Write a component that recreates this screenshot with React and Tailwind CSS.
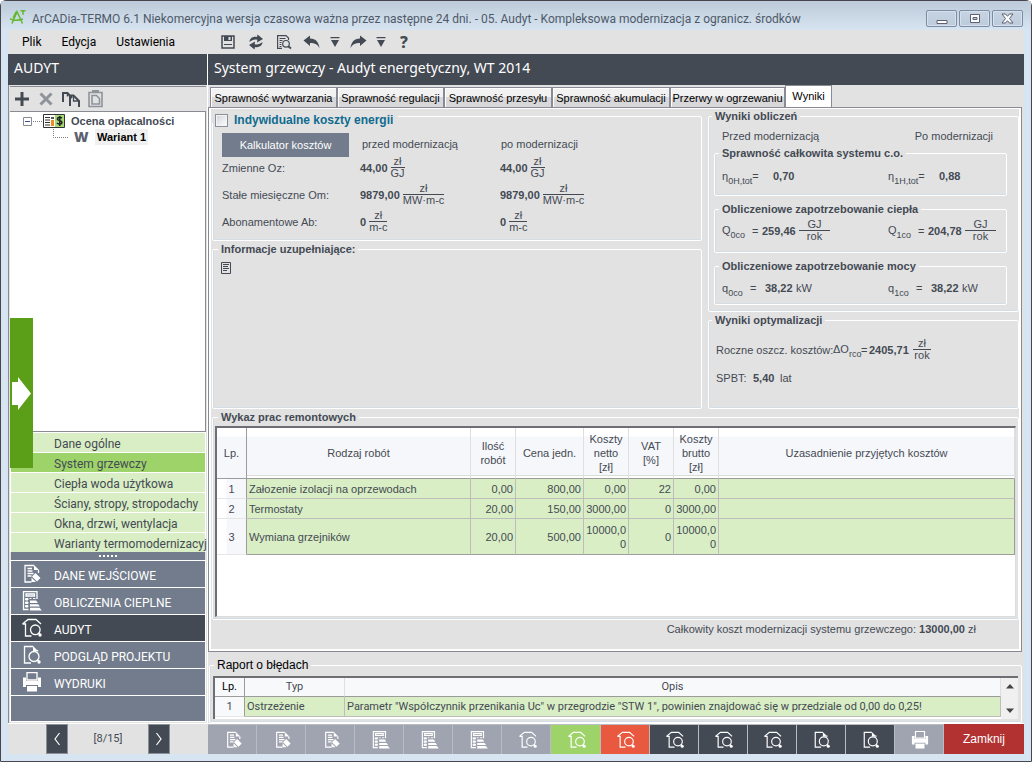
import React from "react";

const ui = "font-['Noto_Sans','Open_Sans',sans-serif]";
const compact = "font-['Roboto','Noto_Sans',sans-serif]";

function EditDoc({ size = 20 }) {
  return (
    <svg width={size} height={size} viewBox="0 0 20 20" fill="none" stroke="currentColor" strokeWidth="1.3" aria-hidden="true">
      <path d="M9.5 18H3V1.5h9M16.5 6v3" />
      <path d="M12 1l5 5h-5z" fill="currentColor" stroke="none" />
      <path d="M5.5 4.500h4.500M5.500 7h5M5.500 9.500h6M5.500 12h4" />
      <path d="M10 12.500l3.500-3.500 5 5-3.500 3.500zM9.500 13.500l4.500 4.500H9.500z" fill="currentColor" stroke="none" />
    </svg>
  );
}

function Calc({ size = 20 }) {
  return (
    <svg width={size} height={size} viewBox="0 0 20 20" fill="none" stroke="currentColor" strokeWidth="1.3" aria-hidden="true">
      <path d="M6.500 18.500H1.500V.7h13.500V8" />
      <path d="M4 3h8.500v2H4z" />
      <path d="M3.500 7.500h2.500v1.500H3.500zM7.500 7.500H9.500M11 7.500h2.500M3.500 11h2.500v1.500H3.500zM3.500 14.500h2.500V16H3.500z" fill="currentColor" strokeWidth="1" />
      <path d="M8 9.500h6l1.500 1.500v1H8zM8 13.300h8l1.500 1.500v.7H8zM8 16.800h9.500L19.500 19v.5H8z" fill="currentColor" stroke="none" />
    </svg>
  );
}

function HouseSearch({ size = 20 }) {
  return (
    <svg width={size} height={size} viewBox="0 0 20 20" fill="none" stroke="currentColor" strokeWidth="1.3" aria-hidden="true">
      <path d="M0.500 6L6 1.500h8L19 6M0.500 6h3v12h6" />
      <circle cx="13.300" cy="11.800" r="4.800" />
      <path d="M16.500 15l2 2" strokeWidth="1.600" />
      <circle cx="18" cy="17" r="1.700" fill="currentColor" stroke="none" />
    </svg>
  );
}

function DocSearch({ size = 20 }) {
  return (
    <svg width={size} height={size} viewBox="0 0 20 20" fill="none" stroke="currentColor" strokeWidth="1.3" aria-hidden="true">
      <path d="M9 18H2.500V1.500H11M15.500 5v1.500" />
      <path d="M11 1l5 5h-5z" fill="currentColor" stroke="none" />
      <circle cx="12" cy="11.500" r="5" />
      <path d="M15.500 15l2 2" strokeWidth="1.600" />
      <circle cx="17" cy="17" r="1.700" fill="currentColor" stroke="none" />
    </svg>
  );
}

function Printer({ size = 20 }) {
  return (
    <svg width={size} height={size} viewBox="0 0 20 20" fill="currentColor" aria-hidden="true">
      <path d="M5 0.500h10V8H5z" fill="none" stroke="currentColor" strokeWidth="1.300" />
      <path d="M1 5.500h3V9h12V5.500h3V15h-3v-2H4v2H1z" />
      <path d="M5 14h10v5.500H5z" />
    </svg>
  );
}

function Logo() {
  return (
    <svg width="16" height="18" viewBox="0 0 16 18" fill="none" stroke="#62b82c" strokeWidth="1.500" aria-hidden="true">
      <path d="M2 16.500L7 4.500 12.500 16.500M0 11.500c3 2 8 2 13 .5" />
      <path d="M6.500 5L3.500 11" strokeWidth="2.200" />
      <path d="M10.500 3.800h5M13 3.800v4" />
    </svg>
  );
}

function Save() {
  return (
    <svg width="16" height="16" viewBox="0 0 16 16" aria-hidden="true">
      <path d="M2 2h12v12H2z" fill="#e2e2e2" stroke="#444a54" strokeWidth="1.500" />
      <path d="M4 2h8v5H4z" fill="#444a54" />
      <path d="M8.500 3h2v3h-2z" fill="#e2e2e2" />
      <path d="M4 10.500h8" stroke="#444a54" />
    </svg>
  );
}

function Refresh() {
  return (
    <svg width="16" height="16" viewBox="0 0 16 16" fill="#444a54" aria-hidden="true">
      <path d="M1.500 8C1.500 4.500 5 2 9 3l.5-2.500L15 5 9 8.500l.3-2.700C6.500 4.800 4 6 1.500 8z" />
      <path d="M14.500 8c0 3.500-3.500 6-7.500 5l-.5 2.500L1 11l6-3.500-.3 2.700c2.800 1 5.300-.2 7.800-2.200z" />
    </svg>
  );
}

function Preview() {
  return (
    <svg width="16" height="16" viewBox="0 0 16 16" fill="none" stroke="#444a54" strokeWidth="1.200" aria-hidden="true">
      <path d="M6 14.400H1.600V1.600h8.400l2.500 2.500V6" />
      <path d="M3.500 4.500h6M3.500 6.500h3M3.500 8.500h2M3.500 10.500h2M3.500 12.500h2" />
      <circle cx="10" cy="9.800" r="3.300" />
      <path d="M12.500 12.500l2.500 2" strokeWidth="2" />
    </svg>
  );
}

function Arrow({ flip }) {
  return (
    <svg width="18" height="14" viewBox="0 0 18 14" fill="#444a54" className={flip ? "-scale-x-100" : ""} aria-hidden="true">
      <path d="M0.500 5.500L7 0.500v3c6 0 9 4 9.500 10C15 9.500 12 8 7 8v3z" />
    </svg>
  );
}

function DropMark() {
  return (
    <svg width="10" height="12" viewBox="0 0 10 12" fill="#444a54" aria-hidden="true">
      <path d="M0.500 1h9v1.200h-9zM1 4h8L5 11z" />
    </svg>
  );
}

function ToolButton({ label, className = "", children }) {
  return (
    <button type="button" aria-label={label} className={`flex items-center justify-center ${className}`}>
      {children}
    </button>
  );
}

function WindowButton({ label, children }) {
  return (
    <button
      type="button"
      aria-label={label}
      className="flex h-[17px] w-[31px] items-center justify-center rounded-[2px] border border-[#7d8ba3] bg-linear-to-b from-[#c6d4e2] to-[#bccbdb] shadow-[inset_0_0_0_1px_#d5e1ec]"
    >
      {children}
    </button>
  );
}

function TitleBar() {
  return (
    <div className="flex h-[29px] items-center gap-[6px] bg-linear-to-b from-[#bccad9] to-[#d7e4f1] pr-[8px] pl-[9px]">
      <Logo />
      <h1 className={`${compact} flex-1 truncate pt-[6px] text-[12px] leading-[18px] text-[#4e5968]`}>
        ArCADia-TERMO 6.1 Niekomercyjna wersja czasowa ważna przez następne 24 dni. - 05. Audyt - Kompleksowa
        modernizacja z ogranicz. środków
      </h1>
      <div className="flex gap-[2px] pt-[6px]">
        <WindowButton label="Minimalizuj">
          <svg width="12" height="12" viewBox="0 0 12 12"><path d="M1 7.500h10v3H1z" fill="#fff" stroke="#5b6170" /></svg>
        </WindowButton>
        <WindowButton label="Maksymalizuj">
          <svg width="12" height="12" viewBox="0 0 12 12"><path d="M1.500 1.500h9v8h-9z M4 4.500h4v2H4z" fill="#fff" fillRule="evenodd" stroke="#5b6170" /></svg>
        </WindowButton>
        <WindowButton label="Zamknij okno">
          <svg width="13" height="11" viewBox="0 0 13 11"><path d="M1 1h3.500l2 2.300L8.500 1H12L8.500 5.500 12 10H8.500l-2-2.300L4.500 10H1l3.500-4.500z" fill="#fff" stroke="#5b6170" /></svg>
        </WindowButton>
      </div>
    </div>
  );
}

function MenuBar() {
  return (
    <div className="flex h-6 items-center text-black">
      <nav className={`${compact} flex w-[211px] gap-[20px] pl-[14px] text-[12px]`}>
        <button type="button">Plik</button>
        <button type="button">Edycja</button>
        <button type="button">Ustawienia</button>
      </nav>
      <div className="flex items-center">
        <ToolButton label="Zapisz" className="w-[18px]"><Save /></ToolButton>
        <ToolButton label="Odśwież" className="ml-[10px] w-[18px]"><Refresh /></ToolButton>
        <ToolButton label="Podgląd" className="ml-[10px] w-[18px]"><Preview /></ToolButton>
        <ToolButton label="Cofnij" className="ml-[10px] w-[18px]"><Arrow /></ToolButton>
        <ToolButton label="Lista cofania" className="ml-[8px] w-[12px]"><DropMark /></ToolButton>
        <ToolButton label="Ponów" className="ml-[8px] w-[18px]"><Arrow flip /></ToolButton>
        <ToolButton label="Lista ponawiania" className="ml-[8px] w-[12px]"><DropMark /></ToolButton>
        <button type="button" className={`${ui} ml-[10px] w-[14px] text-[16px] leading-6 font-extrabold text-[#444a54]`}>?</button>
      </div>
    </div>
  );
}

const stages = ["Dane ogólne", "System grzewczy", "Ciepła woda użytkowa", "Ściany, stropy, stropodachy", "Okna, drzwi, wentylacja", "Warianty termomodernizacyj"];

const sections = [
  ["DANE WEJŚCIOWE", EditDoc],
  ["OBLICZENIA CIEPLNE", Calc],
  ["AUDYT", HouseSearch],
  ["PODGLĄD PROJEKTU", DocSearch],
  ["WYDRUKI", Printer],
];

function Sidebar() {
  return (
    <aside className="flex w-[200px] shrink-0 flex-col border-r border-white">
      <h2 className={`${ui} h-[31px] bg-[#444a54] pl-[6px] text-[14px] leading-[28px] text-white`}>AUDYT</h2>
      <div className="relative flex flex-1 flex-col border-l border-[#8a8a94] px-px">
        <div className="mt-px flex h-[25px] items-center gap-[8px] border-t border-[#8a8a94] pl-[4px]">
          <ToolButton label="Dodaj">
            <svg width="16" height="16" viewBox="0 0 16 16"><path d="M8 1v14M1 8h14" stroke="#444a54" strokeWidth="3" /></svg>
          </ToolButton>
          <ToolButton label="Usuń">
            <svg width="16" height="16" viewBox="0 0 16 16"><path d="M2.500 2.500l11 11M13.500 2.500l-11 11" stroke="#8f9399" strokeWidth="3" /></svg>
          </ToolButton>
          <ToolButton label="Kopiuj">
            <svg width="18" height="16" viewBox="0 0 18 16" fill="none" stroke="#444a54" strokeWidth="2">
              <path d="M1 11V2h4.500l4.500 5M8 15V4.500h3.500L17 10v6" />
              <path d="M5.500 2v3.500" strokeWidth="1.500" />
              <path d="M11.500 4.500V10H16" strokeWidth="1.300" />
            </svg>
          </ToolButton>
          <ToolButton label="Wklej">
            <svg width="16" height="18" viewBox="0 0 16 18" fill="none" stroke="#8f9399" strokeWidth="1.600">
              <path d="M1 2.500h13v14H1z" />
              <path d="M4 5.500h4.500l3 3v5.500H4z" />
              <path d="M4 1h7" strokeWidth="2" />
            </svg>
          </ToolButton>
        </div>
        <div className="flex-1 border border-l-0 border-[#8a8a94] bg-white pt-px font-['Liberation_Sans',sans-serif] text-[11px] leading-[16px] font-bold">
          <div className="flex items-center pl-[13px] text-[#444a54]">
            <svg width="37" height="16" viewBox="0 0 37 16" fill="none" aria-hidden="true">
              <path d="M0.500 4.500h8v8h-8z" stroke="#8a8a94" />
              <path d="M2 8.500h5" stroke="#444a9a" />
              <path d="M10 8.500h10" stroke="#808080" strokeDasharray="1 1" />
            </svg>
            <svg width="22" height="14" viewBox="0 0 22 14" className="-ml-[17px]" aria-hidden="true">
              <path d="M.5.500h21v13H.5z" fill="#fff" stroke="#333" />
              <path d="M12 1h9v12h-9z" fill="#a3d977" />
              <path d="M2 3.500h5M2 6h5M2 8.500h5M2 11h5" stroke="#333" />
              <path d="M8 3h3v2H8z" fill="#555" />
              <path d="M8 6h3v6H8z" fill="#f08a24" />
              <path d="M19 4.200c-2-1.500-5-.8-4.500 1 .5 1.700 4.500 1 4.500 3.300 0 2-3.500 2-5 .5M16.800 2v10" fill="none" stroke="#222" strokeWidth="1.500" />
            </svg>
            <span className="pl-[6px]">Ocena opłacalności</span>
          </div>
          <div className="flex items-center pl-[43px] text-black">
            <svg width="16" height="16" viewBox="0 0 16 16" fill="none" aria-hidden="true">
              <path d="M.5 0v8.500H16" stroke="#808080" strokeDasharray="1 1" />
            </svg>
            <span className="w-[26px] pl-[5px] font-['Open_Sans',sans-serif] text-[14px] font-extrabold text-[#5b6170]">W</span>
            <span className="bg-[#f0f0f0] px-[2px]">Wariant 1</span>
          </div>
        </div>
        <ul className={`${compact} flex flex-col gap-px bg-white px-px pt-px text-[12px] text-[#444a54]`}>
          {stages.map((s, i) => (
            <li key={s}>
              <button
                type="button"
                className={`block h-[19px] w-full pl-[43px] text-left leading-[22px] whitespace-nowrap ${i === 1 ? "bg-[#9ed36a]" : "bg-[#d9eec4]"}`}
              >
                {s}
              </button>
            </li>
          ))}
        </ul>
        <div className="mx-px flex h-[8px] justify-center gap-[2px] bg-[#727c8c] pt-[3px]">
          {[0, 1, 2, 3, 4].map((d) => (
            <span key={d} className="size-[2px] bg-white" />
          ))}
        </div>
        <nav className={`${compact} flex flex-col gap-px bg-white px-px pt-px text-[12px] text-white`}>
          {sections.map(([name, Icon]) => (
            <button
              key={name}
              type="button"
              className={`flex h-[26px] items-center gap-[12px] pl-[11px] ${name === "AUDYT" ? "bg-[#444a54]" : "bg-[#727c8c]"}`}
            >
              <Icon />
              <span className="pt-[3px]">{name}</span>
            </button>
          ))}
          <div className="h-[25px] bg-[#727c8c]" />
        </nav>
        <div className="h-[2px] border-t border-white" />
        <button
          type="button"
          aria-label="Rozwiń panel"
          className="absolute top-[233px] left-px flex h-[150px] w-[23px] items-center justify-center bg-[#5b9e17]"
        >
          <svg width="19" height="33" viewBox="0 0 19 33"><path d="M0 5h6V0l13 16.500L6 33v-5H0z" fill="#fff" /></svg>
        </button>
      </div>
    </aside>
  );
}

function Group({ title, className = "", children, legendClass = "" }) {
  return (
    <fieldset className={`min-w-0 rounded-[2px] border border-white shadow-[inset_1px_0_0_#d3dde6,inset_0_-1px_0_#d3dde6] ${className}`}>
      <legend className={`h-[14px] px-[3px] leading-[14px] font-bold ${legendClass}`}>{title}</legend>
      {children}
    </fieldset>
  );
}

function Unit({ top, bottom, className = "" }) {
  return (
    <span className={`inline-flex flex-col text-center leading-[11px] font-normal ${className}`}>
      <span>{top}</span>
      <span className="border-t border-[#444a54]">{bottom}</span>
    </span>
  );
}

function Sub({ children }) {
  return <span className="relative top-[4px] text-[9px]">{children}</span>;
}

const costRows = [
  ["Zmienne Oz:", "44,00", "GJ"],
  ["Stałe miesięczne Om:", "9879,00", "MW·m-c"],
  ["Abonamentowe Ab:", "0", "m-c"],
];

function EnergyCosts() {
  return (
    <Group
      className="h-[132px] pb-px"
      legendClass="-ml-px"
      title={
        <label className="flex items-center gap-[6px] pt-[4px] pr-[2px] text-[12px] leading-[14px] text-[#0f6b8f]">
          <input type="checkbox" className="size-[13px] appearance-none border border-[#8a8f98] bg-linear-to-br from-[#cfd3d8] to-white shadow-[inset_0_0_0_1px_#f4f4f4]" />
          Indywidualne koszty energii
        </label>
      }
    >
      <div className="grid grid-cols-[138px_140px_1fr] items-center pt-[10px] pl-[9px]">
        <button type="button" className="-mb-[3px] h-6 w-[127px] bg-[#727c8c] text-white">Kalkulator kosztów</button>
        <span className="pl-[2px]">przed modernizacją</span>
        <span className="pl-px">po modernizacji</span>
        {costRows.map(([label, value, unit]) => (
          <React.Fragment key={label}>
            <span className="flex h-[27px] items-center">{label}</span>
            {[0, 1].map((k) => (
              <span key={k} className="flex items-center gap-[3px] font-bold">
                {value}
                <Unit top="zł" bottom={unit} />
              </span>
            ))}
          </React.Fragment>
        ))}
      </div>
    </Group>
  );
}

function Results() {
  return (
    <Group title="Wyniki obliczeń" className="pr-[11px] pb-[6px] pl-[5px]" legendClass="ml-[-2px]">
      <div className="flex h-[23px] items-end justify-between pr-[14px] pb-[3px] pl-[8px]">
        <span>Przed modernizacją</span>
        <span>Po modernizacji</span>
      </div>
      <div className="flex flex-col gap-[6px]">
        <Group title="Sprawność całkowita systemu c.o." className="h-[50px]" legendClass="ml-[4px]">
          <div className="grid grid-cols-[166px_1fr] pt-[9px] pl-[7px]">
            {[["0H,tot", "0,70"], ["1H,tot", "0,88"]].map(([s, v]) => (
              <span key={s} className="flex">
                <span className="w-[51px]">η<Sub>{s}</Sub>=</span>
                <b>{v}</b>
              </span>
            ))}
          </div>
        </Group>
        <Group title="Obliczeniowe zapotrzebowanie ciepła" className="h-[51px]" legendClass="ml-[4px]">
          <div className="grid grid-cols-[166px_1fr] pt-[3px] pl-[7px]">
            {[["0co", "259,46"], ["1co", "204,78"]].map(([s, v]) => (
              <span key={s} className="flex items-center">
                <span className="w-[30px]">Q<Sub>{s}</Sub></span>
                <span className="w-[10px]">=</span>
                <b className="w-[37px]">{v}</b>
                <Unit top="GJ" bottom="rok" className="w-[31px]" />
              </span>
            ))}
          </div>
        </Group>
        <Group title="Obliczeniowe zapotrzebowanie mocy" className="h-[46px]" legendClass="ml-[4px]">
          <div className="grid grid-cols-[166px_1fr] pt-[8px] pl-[7px]">
            {["0co", "1co"].map((s) => (
              <span key={s} className="flex">
                <span className="w-[28px]">q<Sub>{s}</Sub></span>
                <span className="w-[15px]">=</span>
                <b className="w-[31px]">38,22</b>
                <span>kW</span>
              </span>
            ))}
          </div>
        </Group>
      </div>
    </Group>
  );
}

function Optimisation() {
  return (
    <Group title="Wyniki optymalizacji" className="min-h-[96px] flex-1" legendClass="ml-[3px]">
      <div className="flex flex-col gap-[10px] pt-[11px] pl-[7px]">
        <div className="flex items-center">
          <span className="w-[117px] whitespace-nowrap">Roczne oszcz. kosztów:</span>
          <span className="w-[28px] whitespace-nowrap">ΔO<Sub>rco</Sub></span>
          <span className="w-[8px]">=</span>
          <b className="w-[44px]">2405,71</b>
          <Unit top="zł" bottom="rok" className="w-[18px]" />
        </div>
        <div className="flex">
          <span className="w-[37px]">SPBT:</span>
          <b className="w-[27px]">5,40</b>
          <span>lat</span>
        </div>
      </div>
    </Group>
  );
}

const workHeads = ["Lp.", "Rodzaj robót", "Ilość robót", "Cena jedn.", "Koszty netto [zł]", "VAT [%]", "Koszty brutto [zł]", "Uzasadnienie przyjętych kosztów"];
const workWidths = ["w-[30px]", "w-[224px]", "w-[45px]", "w-[68px]", "w-[45px]", "w-[45px]", "w-[45px]", ""];
const works = [
  ["Załozenie izolacji na oprzewodach", "0,00", "800,00", "0,00", "22", "0,00", ""],
  ["Termostaty", "20,00", "150,00", "3000,00", "0", "3000,00", ""],
  ["Wymiana grzejników", "20,00", "500,00", "10000,00", "0", "10000,00", ""],
];

function Works() {
  return (
    <Group title="Wykaz prac remontowych" className="flex flex-1 flex-col px-[2px] pb-[2px]" legendClass="ml-[3px]">
      <div className="mt-[2px] h-full border-t-2 border-r border-b border-l-2 border-t-[#6e6e74] border-r-[#dcdcdc] border-b-[#dcdcdc] border-l-[#6e6e74] bg-white">
        <table className="w-full table-fixed border-separate border-spacing-0 leading-[14px]">
          <thead>
            <tr className="h-[51px] bg-linear-to-b from-white from-[8px] to-[#f6f7fa] to-[9px]">
              {workHeads.map((h, i) => (
                <th
                  key={h}
                  scope="col"
                  className={`${workWidths[i]} border-r border-b border-b-[#9c9c9c] px-[4px] font-normal ${i === 0 ? "border-r-[#9c9c9c]" : "border-r-[#dfdfdf] shadow-[inset_0_-2px_0_#fff,inset_0_-3px_0_#dcdcdc]"}`}
                >
                  {h}
                </th>
              ))}
            </tr>
          </thead>
          <tbody>
            {works.map((row, r) => (
              <tr key={row[0]} className={r === 2 ? "h-[36px]" : "h-[20px]"}>
                <th scope="row" className="border-r border-b border-r-[#9c9c9c] border-b-[#e6e6e6] bg-linear-to-r from-white from-[9px] to-[#f6f7fa] to-[10px] font-normal">
                  {r + 1}
                </th>
                {row.map((c, i) => (
                  <td
                    key={i}
                    className={`border-r border-b bg-[#d9eec4] pr-[2px] break-all ${r === 2 ? "border-b-[#9c9c9c]" : "border-b-[#bdbdbd]"} ${i === 6 ? "border-r-[#9c9c9c]" : "border-r-[#bdbdbd]"} ${i === 0 ? "pl-[2px] text-left" : "text-right"}`}
                  >
                    {c}
                  </td>
                ))}
              </tr>
            ))}
          </tbody>
        </table>
      </div>
    </Group>
  );
}

const tabs = [
  ["Sprawność wytwarzania", "w-[127px]"],
  ["Sprawność regulacji", "w-[107px]"],
  ["Sprawność przesyłu", "w-[108px]"],
  ["Sprawność akumulacji", "w-[118px]"],
  ["Przerwy w ogrzewaniu", "w-[115px]"],
  ["Wyniki", "w-[47px]"],
];

function Tabs() {
  return (
    <div role="tablist" className="flex h-[22px] items-end pl-[2px] text-[11px] text-black">
      {tabs.map(([t, w], i) =>
        i === 5 ? (
          <button key={t} type="button" role="tab" aria-selected="true" className={`${w} -mb-px h-[23px] border border-b-0 border-[#8a8a94] bg-white pb-[2px]`}>
            {t}
          </button>
        ) : (
          <button
            key={t}
            type="button"
            role="tab"
            aria-selected="false"
            className={`${w} h-[20px] border-t border-r border-l border-[#8a8a94] bg-linear-to-b from-[#f2f2f2] from-50% to-[#d8d8da] to-50% whitespace-nowrap shadow-[inset_1px_1px_0_#fff]`}
          >
            {t}
          </button>
        ),
      )}
    </div>
  );
}

function Report() {
  return (
    <Group
      title={<span className="text-[12px] font-normal text-black">Raport o błędach</span>}
      className="mt-[6px] mr-[2px] ml-px px-[3px] pb-[3px]"
      legendClass="ml-px"
    >
      <div className={`${compact} mt-[4px] flex h-[43px] overflow-hidden border-t-2 border-l-2 border-[#6e6e74] bg-white text-[11px] leading-[14px]`}>
        <table className="h-[39px] flex-1 table-fixed border-separate border-spacing-0">
          <thead>
            <tr className="h-[19px] bg-[#f8f9fb]">
              <th scope="col" className="w-[30px] border-r border-b border-[#9c9c9c] font-normal text-black">Lp.</th>
              <th scope="col" className="w-[100px] border-r border-b border-r-[#dfdfdf] border-b-[#9c9c9c] font-normal">Typ</th>
              <th scope="col" className="border-r border-b border-r-[#dfdfdf] border-b-[#9c9c9c] font-normal">Opis</th>
            </tr>
          </thead>
          <tbody>
            <tr className="h-[20px]">
              <th scope="row" className="border-r border-b border-r-[#9c9c9c] border-b-[#e6e6e6] bg-[#f8f9fb] font-normal">1</th>
              <td className="border-r border-b border-[#bdbdbd] bg-[#d9eec4] pl-[2px]">Ostrzeżenie</td>
              <td className="border-r border-b border-[#bdbdbd] bg-[#d9eec4] pl-[2px] whitespace-nowrap">
                Parametr "Współczynnik przenikania Uc" w przegrodzie "STW 1", powinien znajdować się w przedziale od 0,00 do 0,25!
              </td>
            </tr>
          </tbody>
        </table>
        <div className="flex w-[17px] flex-col items-center justify-between bg-[#f0f0f0] py-[6px]">
          <button type="button" aria-label="Przewiń w górę">
            <svg width="8" height="5" viewBox="0 0 8 5" className="block"><path d="M4 0l4 4.500H0z" fill="#444" /></svg>
          </button>
          <button type="button" aria-label="Przewiń w dół">
            <svg width="8" height="5" viewBox="0 0 8 5" className="block"><path d="M4 5L0 .5h8z" fill="#444" /></svg>
          </button>
        </div>
      </div>
    </Group>
  );
}

const steps = [
  [EditDoc, "Dane wejściowe 1", "bg-[#a0a4b0]"],
  [EditDoc, "Dane wejściowe 2", "bg-[#a0a4b0]"],
  [EditDoc, "Dane wejściowe 3", "bg-[#a0a4b0]"],
  [Calc, "Obliczenia 1", "bg-[#a0a4b0]"],
  [Calc, "Obliczenia 2", "bg-[#a0a4b0]"],
  [Calc, "Obliczenia 3", "bg-[#a0a4b0]"],
  [HouseSearch, "Audyt 1", "bg-[#a0a4b0]"],
  [HouseSearch, "Audyt 2", "bg-[#9ed36a]"],
  [HouseSearch, "Audyt 3", "bg-[#e9593f]"],
  [HouseSearch, "Audyt 4", "bg-[#444a54]"],
  [HouseSearch, "Audyt 5", "bg-[#444a54]"],
  [HouseSearch, "Audyt 6", "bg-[#444a54]"],
  [DocSearch, "Podgląd 1", "bg-[#444a54]"],
  [DocSearch, "Podgląd 2", "bg-[#444a54]"],
  [Printer, "Wydruki", "bg-[#a0a4b0]"],
];

function Footer() {
  return (
    <footer className="flex h-[31px] border-t border-white">
      <div className="flex w-[200px] shrink-0 items-stretch pl-[38px]">
        <button type="button" aria-label="Poprzedni" className="flex w-[22px] items-center justify-center border border-[#8a8f98] bg-[#444a54]">
          <svg width="8" height="14" viewBox="0 0 8 14" fill="none" stroke="#fff" strokeWidth="1.200"><path d="M6.500 1L2 7l4.500 6" /></svg>
        </button>
        <span className={`${compact} flex w-[80px] items-center justify-center text-[11px] text-[#444a54]`}>[8/15]</span>
        <button type="button" aria-label="Następny" className="flex w-[22px] items-center justify-center border border-[#8a8f98] bg-[#444a54]">
          <svg width="8" height="14" viewBox="0 0 8 14" fill="none" stroke="#fff" strokeWidth="1.200"><path d="M1.500 1L6 7l-4.500 6" /></svg>
        </button>
      </div>
      <div className="flex flex-1">
        {steps.map(([Icon, label, bg]) => (
          <button key={label} type="button" aria-label={label} className={`${bg} flex flex-1 items-center justify-center border-t border-r border-[#b9bcc3] pl-[3px] text-white`}>
            <Icon size={18} />
          </button>
        ))}
        <button type="button" className="w-20 bg-[#b23232] text-[12px] text-white">Zamknij</button>
      </div>
    </footer>
  );
}

export default function App() {
  return (
    <div className="flex min-h-screen flex-col rounded-t-[6px] border border-[#46464c] bg-[#d7e4f1] font-['Liberation_Sans',Arial,sans-serif] text-[11px] leading-[14px] text-[#444a54]">
      <TitleBar />
      <div className="mx-[7px] mb-[7px] flex flex-1 flex-col bg-[#e2e2e2]">
        <MenuBar />
        <div className="flex flex-1">
          <Sidebar />
          <main className="flex min-w-0 flex-1 flex-col">
            <h2 className={`${ui} h-[31px] bg-[#444a54] pl-[6px] text-[14px] leading-[28px] text-white`}>
              System grzewczy - Audyt energetyczny, WT 2014
            </h2>
            <Tabs />
            <div className="mr-[2px] flex flex-1 flex-col border border-[#8a8a94] bg-white px-[2px] pt-px pb-[2px]">
              <div className="flex flex-1 flex-col bg-[#e2e2e2] pl-px">
                <div className="flex gap-[6px]">
                  <div className="flex flex-1 flex-col gap-px">
                    <EnergyCosts />
                    <Group title="Informacje uzupełniające:" className="flex-1" legendClass="ml-[5px]">
                      <button type="button" aria-label="Edytuj informacje" className="mt-[6px] ml-[8px] block">
                        <svg width="10" height="12" viewBox="0 0 10 12" fill="none" stroke="#444a54" className="block">
                          <path d="M.5.500h9v11h-9zM2 2.500h6M2 4.500h5M2 6.500h6M2 8.500h4" />
                        </svg>
                      </button>
                    </Group>
                  </div>
                  <div className="flex w-[311px] flex-col gap-px">
                    <Results />
                    <Optimisation />
                  </div>
                </div>
                <div className="mt-px flex flex-1 flex-col">
                  <Works />
                </div>
                <p className="h-[29px] pt-px pr-[43px] text-right leading-[16px]">
                  Całkowity koszt modernizacji systemu grzewczego: <b>13000,00</b> zł
                </p>
              </div>
            </div>
            <Report />
          </main>
        </div>
        <Footer />
      </div>
    </div>
  );
}
